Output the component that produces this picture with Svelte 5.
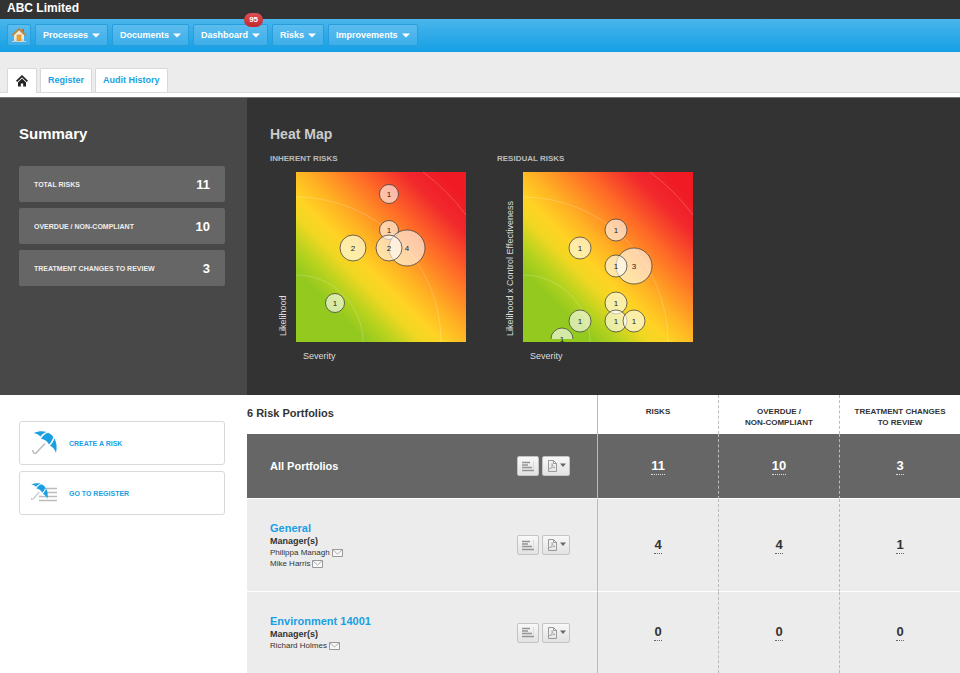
<script>
  const menu = [
    { label: 'Processes' },
    { label: 'Documents' },
    { label: 'Dashboard', badge: 95 },
    { label: 'Risks' },
    { label: 'Improvements' },
  ];

  const summary = [
    { label: 'TOTAL RISKS', value: 11 },
    { label: 'OVERDUE / NON-COMPLIANT', value: 10 },
    { label: 'TREATMENT CHANGES TO REVIEW', value: 3 },
  ];

  // Bubble positions are in the 170 x 170 space of the plot
  const heatMaps = [
    {
      id: 'inherent',
      title: 'INHERENT RISKS',
      yAxis: 'Likelihood',
      bubbles: [
        { x: 93, y: 22, r: 9.5, count: 1 },
        { x: 93, y: 58, r: 9.5, count: 1 },
        { x: 57, y: 76, r: 13, count: 2 },
        { x: 111, y: 76, r: 18, count: 4 },
        { x: 93, y: 76, r: 13, count: 2 },
        { x: 39, y: 131, r: 9.5, count: 1 },
      ],
    },
    {
      id: 'residual',
      title: 'RESIDUAL RISKS',
      yAxis: 'Likelihood x Control Effectiveness',
      bubbles: [
        { x: 93, y: 58, r: 11, count: 1 },
        { x: 57, y: 76, r: 11, count: 1 },
        { x: 111, y: 94, r: 18, count: 3 },
        { x: 93, y: 94, r: 11, count: 1 },
        { x: 93, y: 131, r: 11, count: 1 },
        { x: 57, y: 149, r: 11, count: 1 },
        { x: 93, y: 149, r: 11, count: 1 },
        { x: 111, y: 149, r: 11, count: 1 },
        { x: 39, y: 167, r: 11, count: 1 },
      ],
    },
  ];

  const portfolios = [
    { name: 'All Portfolios', total: true, managers: [], counts: [11, 10, 3] },
    { name: 'General', managers: ['Philippa Managh', 'Mike Harris'], counts: [4, 4, 1] },
    { name: 'Environment 14001', managers: ['Richard Holmes'], counts: [0, 0, 0] },
  ];
</script>

{#snippet umbrella()}
  <path d="M13 12.500 4.600 21.600C2.800 23.400.6 22.200.8 19" fill="none" stroke="#b9bbbd" stroke-width="1.500" />
  <path d="M1.600 2.200C6 .2 10.500-.2 14.600 1 12 1.800 9.800 3.200 8.400 5.400 6.600 3.400 4.600 2.400 1.600 2.200Z" fill="#1a9fe3" />
  <path d="M16 1.800C18 2.600 19.800 3.900 21.200 5.800 20.600 8.800 19.200 11.200 17 13.400 15.500 10.600 13 8.600 9 7.800 10.600 4.800 13.200 2.600 16 1.800Z" fill="#1a9fe3" />
  <path d="M22.200 7.200C24.800 11.500 25.200 16.500 24 22 23 18.800 21.200 16.400 18 14.800 20.200 12.600 21.700 9.800 22.200 7.200Z" fill="#1a9fe3" />
{/snippet}

<header class="brand">ABC Limited</header>

<nav class="menu">
  <button class="menu-item home" aria-label="Home">
    <svg width="16" height="16" viewBox="0 0 16 16" aria-hidden="true">
      <path d="M3 7.500 8 3l5 4.500V14H3z" fill="#f3ead6" />
      <rect x="3" y="12" width="10" height="2" fill="#d9dde0" />
      <rect x="11" y="2" width="2" height="4" fill="#b9683a" />
      <rect x="6" y="8" width="4" height="6" fill="#f0a32a" stroke="#cf8420" stroke-width="0.500" />
      <path d="M1.200 8.500 8 2l6.800 6.500" fill="none" stroke="#b98845" stroke-width="1.800" />
      <path d="M1 14.500h14" stroke="#c3d3dc" />
    </svg>
  </button>
  {#each menu as item}
    <button class="menu-item">
      {item.label}
      <svg width="8" height="5" viewBox="0 0 8 5" aria-hidden="true"><path d="M0 .5h8L4 4.500z" fill="#fff" /></svg>
      {#if item.badge}
        <span class="badge">{item.badge}</span>
      {/if}
    </button>
  {/each}
</nav>

<div class="tabs">
  <a class="tab active" href="#home" aria-label="Home">
    <svg width="12" height="12" viewBox="0 0 12 12" aria-hidden="true">
      <path d="M.6 6.400 6 1.200l5.400 5.200" fill="none" stroke="#222" stroke-width="1.800" />
      <path d="M2 7.400 6 3.600l4 3.800V11.500H7.200V8.500H4.800v3H2z" fill="#222" />
    </svg>
  </a>
  <a class="tab" href="#register">Register</a>
  <a class="tab" href="#audit">Audit History</a>
</div>

<main>
  <section class="summary">
    <h2>Summary</h2>
    <ul>
      {#each summary as item}
        <li>
          <span>{item.label}</span>
          <strong>{item.value}</strong>
        </li>
      {/each}
    </ul>
  </section>

  <section class="heat">
    <h2>Heat Map</h2>
    <div class="charts">
      {#each heatMaps as map}
        <div class="chart">
          <h3>{map.title}</h3>
          <div class="y-axis">{map.yAxis}</div>
          <svg class="plot" width="170" height="170" viewBox="0 0 170 170">
            <defs>
              <linearGradient id="heat-{map.id}" x1="0" y1="1" x2="1" y2="0">
                <stop offset="0.210" stop-color="#94c91f" />
                <stop offset="0.280" stop-color="#b4d21e" />
                <stop offset="0.370" stop-color="#f0d722" />
                <stop offset="0.430" stop-color="#ffd324" />
                <stop offset="0.520" stop-color="#ffb323" />
                <stop offset="0.680" stop-color="#ff6a27" />
                <stop offset="0.820" stop-color="#f1282d" />
                <stop offset="0.920" stop-color="#ef1a24" />
              </linearGradient>
              <clipPath id="clip-{map.id}"><rect width="170" height="167" /></clipPath>
            </defs>
            <rect width="170" height="170" fill="url(#heat-{map.id})" />
            <g fill="none" stroke="#fff" stroke-opacity="0.200">
              <path d="M0 103A67 67 0 0 1 67 170" />
              <path d="M0 25A145 145 0 0 1 145 170" />
              <path d="M127 0A212 212 0 0 1 170 43" />
            </g>
            <g clip-path="url(#clip-{map.id})">
              {#each map.bubbles as b}
                <circle class="bubble" cx={b.x} cy={b.y} r={b.r} />
              {/each}
            </g>
            {#each map.bubbles as b}
              <text x={b.x} y={b.y + 3}>{b.count}</text>
            {/each}
          </svg>
          <div class="x-axis">Severity</div>
        </div>
      {/each}
    </div>
  </section>

  <aside class="actions">
    <a class="action" href="#create">
      <svg width="28" height="26" viewBox="-1 -1 28 26" aria-hidden="true">
        {@render umbrella()}
      </svg>
      CREATE A RISK
    </a>
    <a class="action" href="#register">
      <svg width="28" height="26" viewBox="0 0 28 26" aria-hidden="true">
        <path d="M13 8.500h13M13 12.500h13M8 16.500h18M8 20.500h18" stroke="#b9bbbd" stroke-width="1.600" />
        <g transform="translate(-1 3) scale(.72)">{@render umbrella()}</g>
      </svg>
      GO TO REGISTER
    </a>
  </aside>

  <table>
    <thead>
      <tr>
        <th class="name">6 Risk Portfolios</th>
        <th>RISKS</th>
        <th>OVERDUE /<br />NON-COMPLIANT</th>
        <th>TREATMENT CHANGES<br />TO REVIEW</th>
      </tr>
    </thead>
    <tbody>
      {#each portfolios as portfolio}
        <tr class:total={portfolio.total}>
          <td class="name">
            <div class="portfolio">
              <div>
                {#if portfolio.total}
                  <strong class="title">{portfolio.name}</strong>
                {:else}
                  <a class="title" href="#portfolio">{portfolio.name}</a>
                  <div class="managers">Manager(s)</div>
                {/if}
                {#each portfolio.managers as manager}
                  <div class="manager">
                    {manager}
                    <svg width="11" height="8" viewBox="0 0 11 8" aria-hidden="true">
                      <path d="M.5.5h10v7H.5z" fill="#f8f8f8" stroke="#999" />
                      <path d="M.5.5 5.500 5l5-4.500" fill="none" stroke="#999" stroke-width="0.800" />
                    </svg>
                  </div>
                {/each}
              </div>
              <div class="tools">
                <button class="tool" aria-label="Chart">
                  <svg width="14" height="11" viewBox="0 0 14 11" aria-hidden="true">
                    <path d="M1 1.500h8M1 4h6M1 6.500h10M1 9.500h12" stroke="#959595" stroke-width="1.600" />
                    <path d="M12.500 0v8" stroke="#ddd" />
                  </svg>
                </button>
                <button class="tool wide" aria-label="Export to PDF">
                  <svg width="19" height="12" viewBox="0 0 19 12" aria-hidden="true">
                    <path d="M1.500.5h5l3 3v8h-8zM6.500.5v3h3" fill="none" stroke="#999" />
                    <path d="M5 3.500c.8 2-.8 4-2.500 5.500C4 8 6 7.200 8 7.500 6.500 7.300 5 5.500 5 3.500" fill="none" stroke="#999" stroke-width="0.700" />
                    <path d="M13 3.500h6l-3 3.500z" fill="#666" />
                  </svg>
                </button>
              </div>
            </div>
          </td>
          {#each portfolio.counts as count}
            <td><a class="count" href="#risks">{count}</a></td>
          {/each}
        </tr>
      {/each}
    </tbody>
  </table>
</main>

<style>
  :global(body) {
    background: #fff;
    color: #333;
    font-family: "Liberation Sans", Arial, sans-serif;
    font-size: 9px;
  }

  h2,
  h3,
  ul {
    margin: 0;
    padding: 0;
  }

  a {
    color: #1a9fe3;
    text-decoration: none;
  }

  button {
    font-family: inherit;
    cursor: pointer;
  }

  svg {
    display: block;
    flex: none;
  }

  .brand {
    padding: 0 7px 3px;
    background: #333;
    color: #fff;
    font-size: 12px;
    font-weight: bold;
    line-height: 16px;
  }

  .menu {
    display: flex;
    gap: 4px;
    padding: 5px 7px 6px;
    background: linear-gradient(#4ab5ec, #159fe4);
  }

  .menu-item {
    position: relative;
    display: flex;
    align-items: center;
    gap: 4px;
    height: 22px;
    padding: 0 7px;
    border: 1px solid #269fdc;
    border-radius: 2px;
    background: linear-gradient(#5bbcee, #3eaee9);
    color: #fff;
    font-size: 9px;
    font-weight: bold;
  }

  .menu-item.home {
    padding: 0 3px;
  }

  .badge {
    position: absolute;
    top: -12px;
    right: 4px;
    width: 19px;
    border-radius: 7px;
    background: linear-gradient(#dd5055, #c4262c);
    font-size: 8px;
    line-height: 14px;
    text-align: center;
  }

  .tabs {
    display: flex;
    gap: 3px;
    padding: 16px 7px 0;
    border-bottom: 1px solid #d8d8d8;
    background: #ececec;
  }

  .tab {
    padding: 0 7px;
    border: 1px solid #d8d8d8;
    border-bottom: 0;
    border-radius: 2px 2px 0 0;
    background: #fff;
    font-weight: bold;
    line-height: 23px;
  }

  .tab.active {
    display: flex;
    align-items: center;
    margin-bottom: -1px;
    padding: 0 8px;
  }

  main {
    display: grid;
    grid-template-columns: 247px 1fr;
    margin-top: 4px;
  }

  .summary {
    padding: 27px 22px 0 19px;
    border-top: 1px solid #777;
    background: #484848;
    color: #fff;
  }

  h2 {
    font-size: 15px;
    line-height: 18px;
  }

  .summary ul {
    display: grid;
    gap: 6px;
    margin-top: 23px;
    list-style: none;
  }

  .summary li {
    display: flex;
    align-items: center;
    justify-content: space-between;
    height: 36px;
    padding: 0 15px;
    border-radius: 2px;
    background: #666;
    font-size: 7px;
    font-weight: bold;
  }

  .summary span {
    color: #eee;
  }

  .summary strong {
    font-size: 13px;
  }

  .heat {
    padding: 27px 23px 33px;
    border-top: 1px solid #777;
    background: #333;
    color: #ddd;
  }

  .heat h2 {
    color: #ccc;
    font-size: 14px;
  }

  .charts {
    display: flex;
    gap: 31px;
    margin-top: 10px;
  }

  .chart {
    display: grid;
    grid-template-columns: 26px 170px;
  }

  .chart h3 {
    grid-column: 1 / 3;
    margin-bottom: 7px;
    color: #bbb;
    font-size: 8px;
    line-height: 12px;
  }

  .y-axis {
    justify-self: center;
    padding-top: 6px;
    line-height: 12px;
    writing-mode: vertical-rl;
    transform: rotate(180deg);
  }

  .x-axis {
    grid-column: 2;
    padding: 8px 7px 0;
    line-height: 12px;
  }

  .plot {
    overflow: visible;
  }

  .bubble {
    fill: #fff;
    fill-opacity: 0.6;
    stroke: #333;
    stroke-opacity: 0.7;
  }

  .plot text {
    fill: #222;
    font-size: 8px;
    text-anchor: middle;
  }

  .actions {
    display: flex;
    flex-direction: column;
    gap: 6px;
    padding: 26px 22px 26px 19px;
  }

  .action {
    display: flex;
    align-items: center;
    gap: 10px;
    height: 42px;
    padding: 0 11px;
    border: 1px solid #d9d9d9;
    border-radius: 3px;
    font-size: 7px;
    font-weight: bold;
  }

  table {
    width: 100%;
    border-spacing: 0;
    table-layout: fixed;
  }

  th {
    height: 39px;
    padding: 11px 0 5px;
    border-left: 1px dashed #bbb;
    box-sizing: border-box;
    font-size: 8px;
    line-height: 11px;
    vertical-align: top;
  }

  td {
    padding: 0;
    border-bottom: 1px solid #fff;
    border-left: 1px dashed #bbb;
    background: #ececec;
    text-align: center;
  }

  tr:last-child td {
    border-bottom: 0;
  }

  .name {
    width: 350px;
    border-left: 0;
    text-align: left;
  }

  th.name {
    font-size: 11px;
    line-height: 14px;
  }

  .name + th,
  .name + td {
    border-left: 1px solid #bbb;
  }

  .total td {
    background: #666;
    color: #fff;
  }

  .portfolio {
    display: flex;
    align-items: center;
    justify-content: space-between;
    padding: 22px 27px 22px 23px;
  }

  .title {
    display: block;
    font-size: 11px;
    font-weight: bold;
    line-height: 14px;
  }

  .managers {
    font-weight: bold;
    line-height: 12px;
  }

  .manager {
    display: flex;
    align-items: center;
    gap: 2px;
    font-size: 8px;
    line-height: 11px;
  }

  .tools {
    display: flex;
    gap: 3px;
  }

  .tool {
    display: flex;
    align-items: center;
    justify-content: center;
    width: 22px;
    height: 20px;
    padding: 0;
    border: 1px solid #c4c4c4;
    border-radius: 2px;
    background: linear-gradient(#f8f8f8, #e2e2e2);
  }

  .tool.wide {
    width: 28px;
  }

  .count {
    display: inline-block;
    border-bottom: 1px dotted #666;
    color: #333;
    font-size: 13px;
    font-weight: bold;
    line-height: 16px;
    vertical-align: middle;
  }

  .total .count {
    border-color: #ddd;
    color: #fff;
  }
</style>
